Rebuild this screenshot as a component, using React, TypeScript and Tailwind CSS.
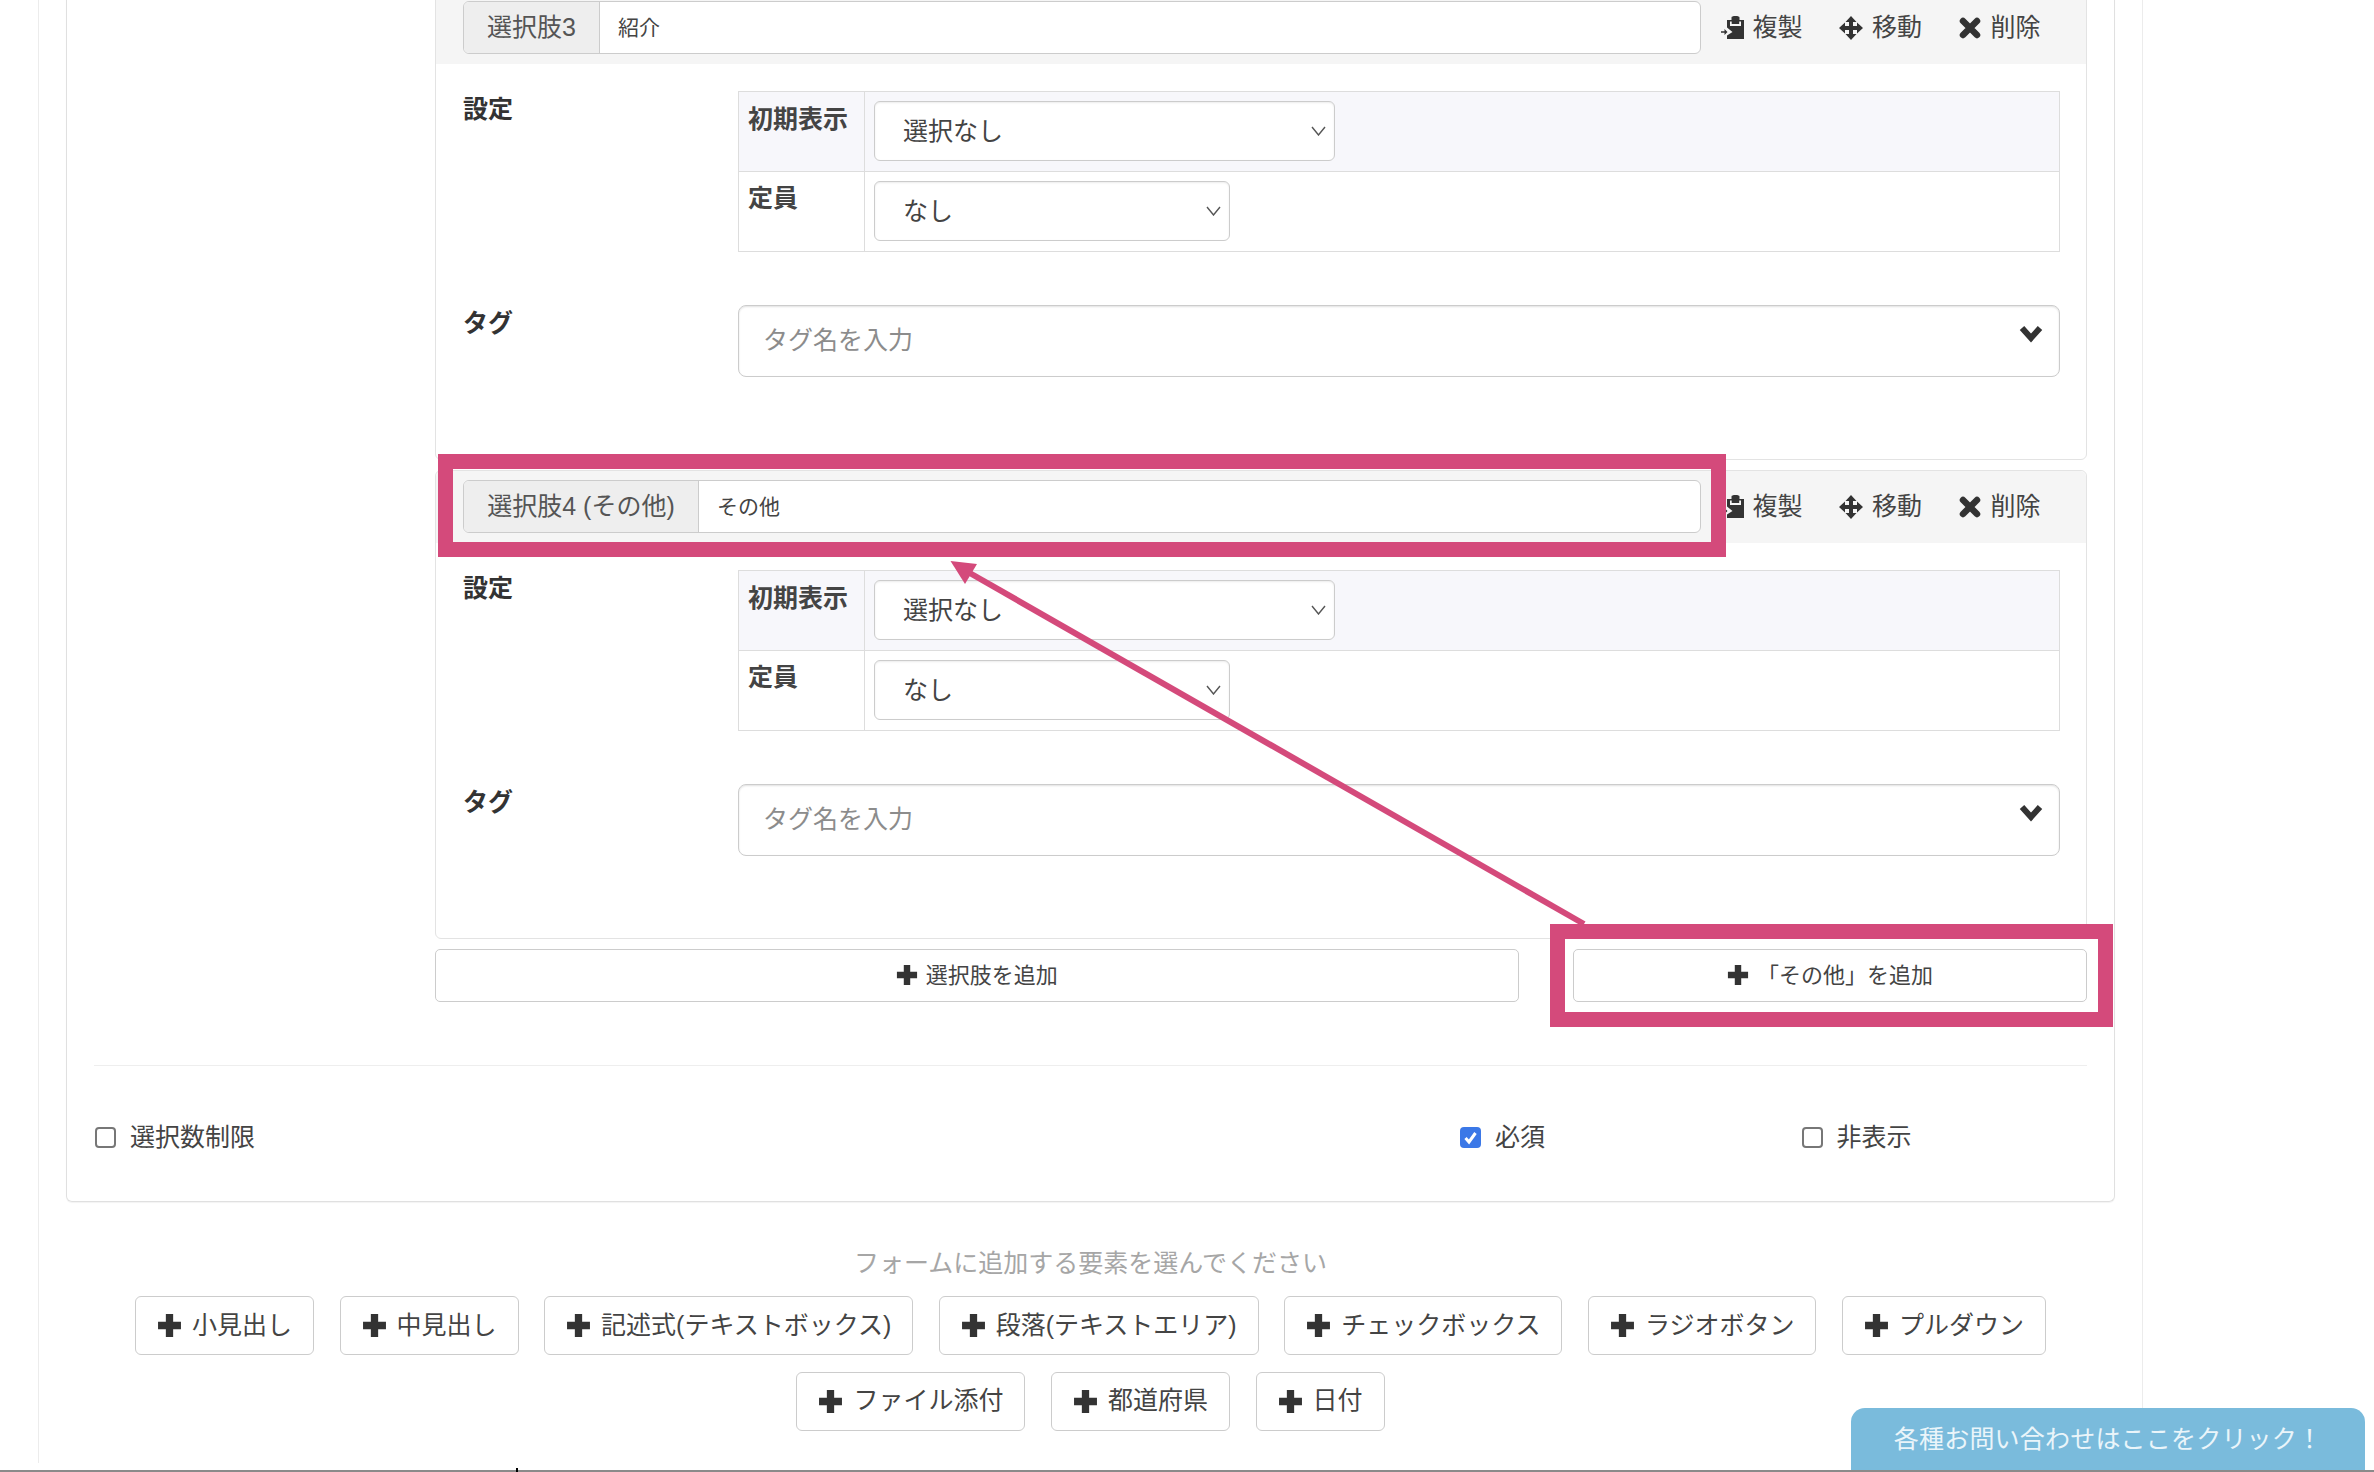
const PlusIcon = ({ size = 25 }: { size?: number }) => (
  <svg width={size} height={size} viewBox="0 0 24 24" className="shrink-0 fill-[#333]">
    <path d="M8.5 1h7v7.500H23v7h-7.500v7.500h-7v-7.500H1v-7h7.500z" />
  </svg>
);

const CopyIcon = () => (
  <svg width="23" height="23" viewBox="0 0 23 23" className="shrink-0 fill-[#333]">
    <path
      fillRule="evenodd"
      d="M6 4h4.500V1.500C10.500.5 12 0 14.500 0s4 .5 4 1.500V4H23v19H6v-3.500L11.500 16 6 11.500zM9 5.500V10h11V5.500h-1.800V8h-7.500V5.500z"
    />
    <path d="M0 15.200h3.500V13l3 3-3 3v-2.200H0z" />
  </svg>
);

const MoveIcon = () => (
  <svg width="24" height="24" viewBox="0 0 24 24" className="shrink-0 fill-[#333]">
    <path d="M12 0l5.500 6h-3.500v4h4V6.500L24 12l-6 5.500V14h-4v4h3.500L12 24l-5.500-6H10v-4H6v3.500L0 12l6-5.500V10h4V6H6.500z" />
  </svg>
);

const RemoveIcon = () => (
  <svg width="22" height="22" viewBox="0 0 22 22" className="shrink-0 stroke-[#333]">
    <path d="M4 4l14 14M18 4L4 18" strokeWidth="6.500" strokeLinecap="round" fill="none" />
  </svg>
);

const ThinChevron = () => (
  <svg width="15" height="10" viewBox="0 0 15 10" className="shrink-0 stroke-[#555]" fill="none">
    <path d="M1 1l6.500 8L14 1" strokeWidth="1.400" />
  </svg>
);

const BoldChevron = () => (
  <svg width="24" height="18" viewBox="0 0 24 18" className="shrink-0 stroke-[#333]" fill="none">
    <path d="M3 3l9 10 9-10" strokeWidth="6" />
  </svg>
);

const FakeSelect = ({ text, widthClass }: { text: string; widthClass: string }) => (
  <div
    className={`flex h-[60px] items-center justify-between rounded-[6px] border border-[#ccc] bg-white pl-[28px] pr-[8px] text-[25px] text-[#444] shadow-[inset_0_1px_2px_rgba(0,0,0,0.08)] ${widthClass}`}
  >
    <span className="pt-[2px]">{text}</span>
    <ThinChevron />
  </div>
);

const ChoicePanel = ({ label, value, labelWidth }: { label: string; value: string; labelWidth: string }) => (
  <div className="h-[468.500px] rounded-[6px] border border-[#e3e3e3] bg-white">
    <div className="flex h-[71.500px] items-center rounded-t-[6px] bg-[#f5f5f5] pl-[27px]">
      <div className="flex h-[53px] w-[1237.500px] overflow-hidden rounded-[6px] border border-[#ccc] bg-white">
        <div className={`flex items-center justify-center border-r border-[#ccc] bg-[#eee] text-[25px] text-[#555] ${labelWidth}`}>
          {label}
        </div>
        <div className="flex items-center pl-[18px] text-[21px] text-[#444]">{value}</div>
      </div>
      <div className="ml-[20px] flex items-center gap-[36.500px] text-[25px] text-[#444]">
        <div className="flex items-center gap-[9px]">
          <CopyIcon />
          <span>複製</span>
        </div>
        <div className="flex items-center gap-[9px]">
          <MoveIcon />
          <span>移動</span>
        </div>
        <div className="flex items-center gap-[10px]">
          <RemoveIcon />
          <span>削除</span>
        </div>
      </div>
    </div>

    <div className="mt-[27px] flex">
      <div className="w-[302px] pl-[27px] pt-[1px] text-[25px] font-bold leading-[35px] text-[#333]">設定</div>
      <div className="w-[1322px] border border-[#ddd] text-[25px] font-bold leading-[35px] text-[#444]">
        <div className="flex h-[80px] border-b border-[#ddd] bg-[#f7f7fb]">
          <div className="w-[126px] border-r border-[#ddd] pl-[9px] pt-[10px]">初期表示</div>
          <div className="pl-[9px] pt-[9px] font-normal">
            <FakeSelect text="選択なし" widthClass="w-[461px]" />
          </div>
        </div>
        <div className="flex h-[79px]">
          <div className="w-[126px] border-r border-[#ddd] pl-[9px] pt-[9px]">定員</div>
          <div className="pl-[9px] pt-[9px] font-normal">
            <FakeSelect text="なし" widthClass="w-[356px]" />
          </div>
        </div>
      </div>
    </div>

    <div className="mt-[53px] flex">
      <div className="w-[302px] pl-[27px] pt-[1.500px] text-[25px] font-bold leading-[35px] text-[#333]">タグ</div>
      <div className="flex h-[72.500px] w-[1322px] items-center justify-between rounded-[8px] border border-[#ccc] pl-[24px] pr-[16px] shadow-[inset_0_1px_2px_rgba(0,0,0,0.12)]">
        <span className="text-[25px] text-[#8c8c8c]">タグ名を入力</span>
        <div className="mb-[14px]">
          <BoldChevron />
        </div>
      </div>
    </div>
  </div>
);

const CheckItem = ({ text, checked, widthClass }: { text: string; checked?: boolean; widthClass: string }) => (
  <div className={`flex items-center gap-[14px] ${widthClass}`}>
    {checked ? (
      <div className="flex h-[21px] w-[21px] items-center justify-center rounded-[4px] bg-[#3b78e7]">
        <svg width="15" height="15" viewBox="0 0 15 15" fill="none" className="stroke-white">
          <path d="M2.500 8l3.500 4 6.500-9" strokeWidth="3" />
        </svg>
      </div>
    ) : (
      <div className="h-[21px] w-[21px] rounded-[4px] border-2 border-[#777] bg-white" />
    )}
    <span className="text-[25px] leading-[35px] text-[#444]">{text}</span>
  </div>
);

const elementButtons = [
  "小見出し",
  "中見出し",
  "記述式(テキストボックス)",
  "段落(テキストエリア)",
  "チェックボックス",
  "ラジオボタン",
  "プルダウン",
  "ファイル添付",
  "都道府県",
  "日付",
];

const App = () => {
  return (
    <div className="relative h-[1472px] overflow-hidden bg-white font-['Liberation_Sans','Noto_Sans_CJK_JP',sans-serif]">
      <div className="ml-[38px] h-full w-[2105px] border-x border-[#ececec] px-[27px]">
        <div className="rounded-b-[6px] border-x border-b border-[#e0e0e0] px-[27px] pb-[45.500px] shadow-[0_1px_1px_rgba(0,0,0,0.05)]">
          <div className="ml-[341px] -mt-[9px] flex w-[1652px] flex-col gap-[10.500px]">
            <ChoicePanel label="選択肢3" value="紹介" labelWidth="w-[136px]" />
            <ChoicePanel label="選択肢4 (その他)" value="その他" labelWidth="w-[235px]" />
          </div>

          <div className="ml-[341px] mt-[10.500px] flex w-[1652px] justify-between text-[22px] text-[#444]">
            <div className="flex h-[52.500px] w-[1083.500px] items-center justify-center gap-[8px] rounded-[5px] border border-[#ccc]">
              <PlusIcon size={22} />
              選択肢を追加
            </div>
            <div className="flex h-[52.500px] w-[514px] items-center justify-center gap-[8px] rounded-[5px] border border-[#ccc]">
              <PlusIcon size={22} />
              「その他」を追加
            </div>
          </div>

          <div className="mt-[63px] h-px bg-[#eee]" />

          <div className="mt-[54.500px] flex">
            <CheckItem text="選択数制限" widthClass="ml-[1px] w-[1365px]" />
            <CheckItem text="必須" checked widthClass="w-[341.500px]" />
            <CheckItem text="非表示" widthClass="" />
          </div>
        </div>

        <p className="mt-[44px] text-center text-[25px] leading-[35px] text-[#a6a6a6]">
          フォームに追加する要素を選んでください
        </p>
        <div className="mt-[15.500px] flex flex-wrap justify-center gap-x-[25.500px] gap-y-[16.500px]">
          {elementButtons.map((name) => (
            <div
              key={name}
              className="flex h-[59px] items-center gap-[10px] rounded-[6px] border border-[#ccc] bg-white px-[21px] text-[25px] text-[#444]"
            >
              <PlusIcon />
              {name}
            </div>
          ))}
        </div>
      </div>

      {/* annotation layer */}
      <div className="absolute left-[438px] top-[453.500px] h-[103.500px] w-[1287.500px] border-[15px] border-[#d44a7b]" />
      <div className="absolute left-[1550px] top-[923.500px] h-[103.500px] w-[563px] border-[15px] border-[#d44a7b]" />
      <svg className="absolute inset-0" width="2374" height="1472" viewBox="0 0 2374 1472" fill="none">
        <path d="M968 572L1584 924" className="stroke-[#d44a7b]" strokeWidth="6" />
        <path d="M950.500 561L977 564L965 584z" className="fill-[#d44a7b]" />
      </svg>

      <div className="absolute bottom-[2px] left-[1851px] flex h-[62px] w-[514px] items-center justify-center rounded-t-[14px] bg-[#7abbdc] text-[25px] tracking-[0.2px] text-[#eaf5fa]">
        <span className="pt-[2px]">各種お問い合わせはここをクリック！</span>
      </div>

      <div className="absolute bottom-0 left-0 h-[2px] w-full bg-[#8a8a8a]" />
      <div className="absolute bottom-0 left-[516px] h-[4px] w-[2px] bg-black" />
    </div>
  );
};

export default App;
